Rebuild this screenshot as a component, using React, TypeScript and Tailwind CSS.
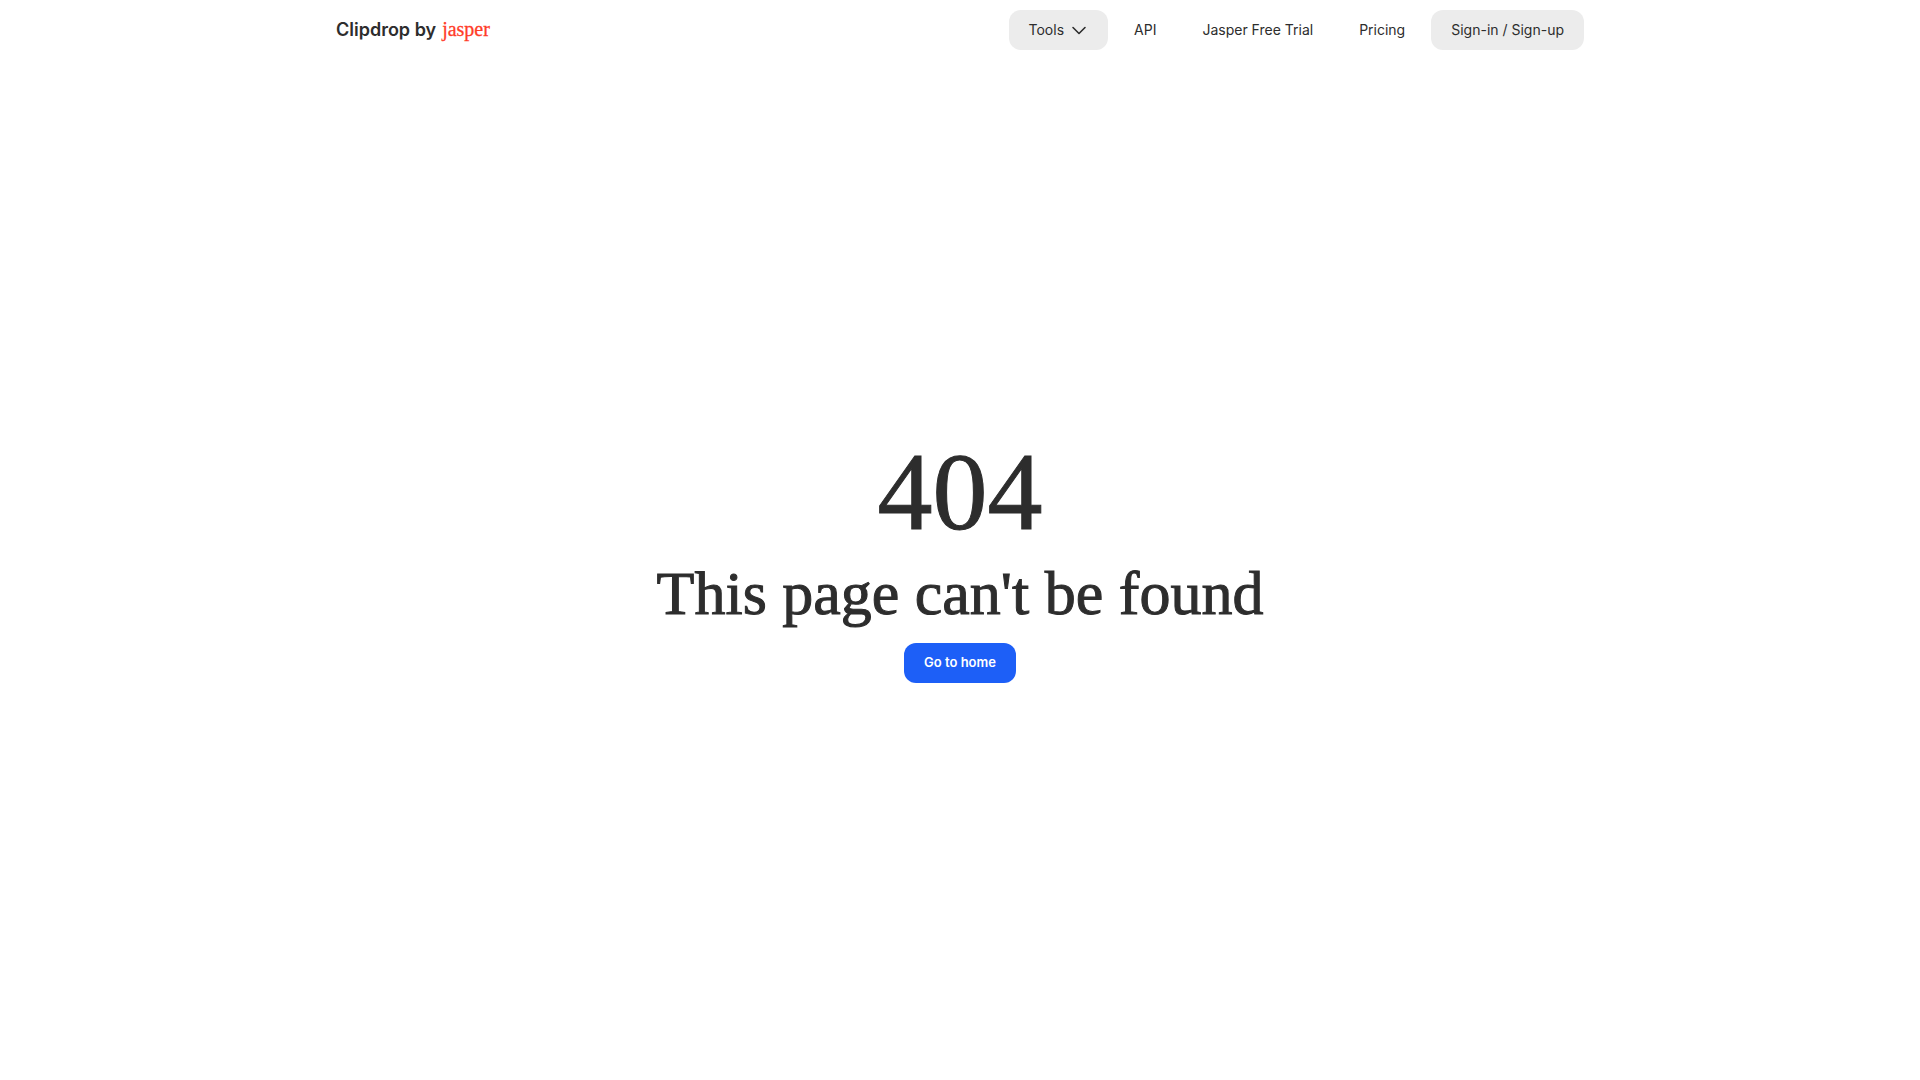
import React from 'react';

const links = [
  { label: 'API', href: '/apis' },
  { label: 'Jasper Free Trial', href: '/jasper' },
  { label: 'Pricing', href: '/pricing' },
];

const Logo = () => (
  <a href="/" className="flex items-baseline gap-1.5 pb-0.5 leading-6">
    <span className="text-[18px] font-semibold">Clipdrop by</span>
    <span className="font-['Liberation_Serif',serif] text-[20px] text-[#ff3c28] [-webkit-text-stroke:0.3px]">
      jasper
    </span>
  </a>
);

const Header = () => (
  <header className="w-full max-w-7xl mx-auto px-4 py-[10px] flex items-center justify-between">
    <Logo />
    <nav className="flex items-center gap-1.5 text-sm">
      <button type="button" className="h-10 px-5 flex items-center gap-1.5 rounded-xl bg-[#ececec]">
        Tools
        <svg
          className="w-[18px] h-[18px]"
          viewBox="0 0 18 18"
          fill="none"
          stroke="currentColor"
          strokeWidth="1.6"
          strokeLinecap="round"
          strokeLinejoin="round"
          aria-hidden="true"
        >
          <path d="M3 6.5l6 6 6-6" />
        </svg>
      </button>
      {links.map((link) => (
        <a key={link.label} href={link.href} className="h-10 px-5 flex items-center rounded-xl">
          {link.label}
        </a>
      ))}
      <a href="/login" className="h-10 px-5 flex items-center rounded-xl bg-[#ececec]">
        Sign-in / Sign-up
      </a>
    </nav>
  </header>
);

const App = () => {
  return (
    <div className="min-h-screen flex flex-col bg-white text-[#2d2d2d] font-['Inter',sans-serif]">
      <Header />
      <main className="flex-1 pb-5 flex flex-col items-center justify-center text-center">
        <h1 className="font-['Liberation_Serif',serif] [-webkit-text-stroke:1px]">
          <span className="block text-[110px] leading-[110px]">404</span>
          <span className="block text-[62px] leading-[92px]">This page can't be found</span>
        </h1>
        <a
          href="/"
          className="h-10 mt-1 px-5 flex items-center rounded-xl bg-[#1d5ff7] text-[13px] font-semibold text-white"
        >
          Go to home
        </a>
      </main>
    </div>
  );
};

export default App;
